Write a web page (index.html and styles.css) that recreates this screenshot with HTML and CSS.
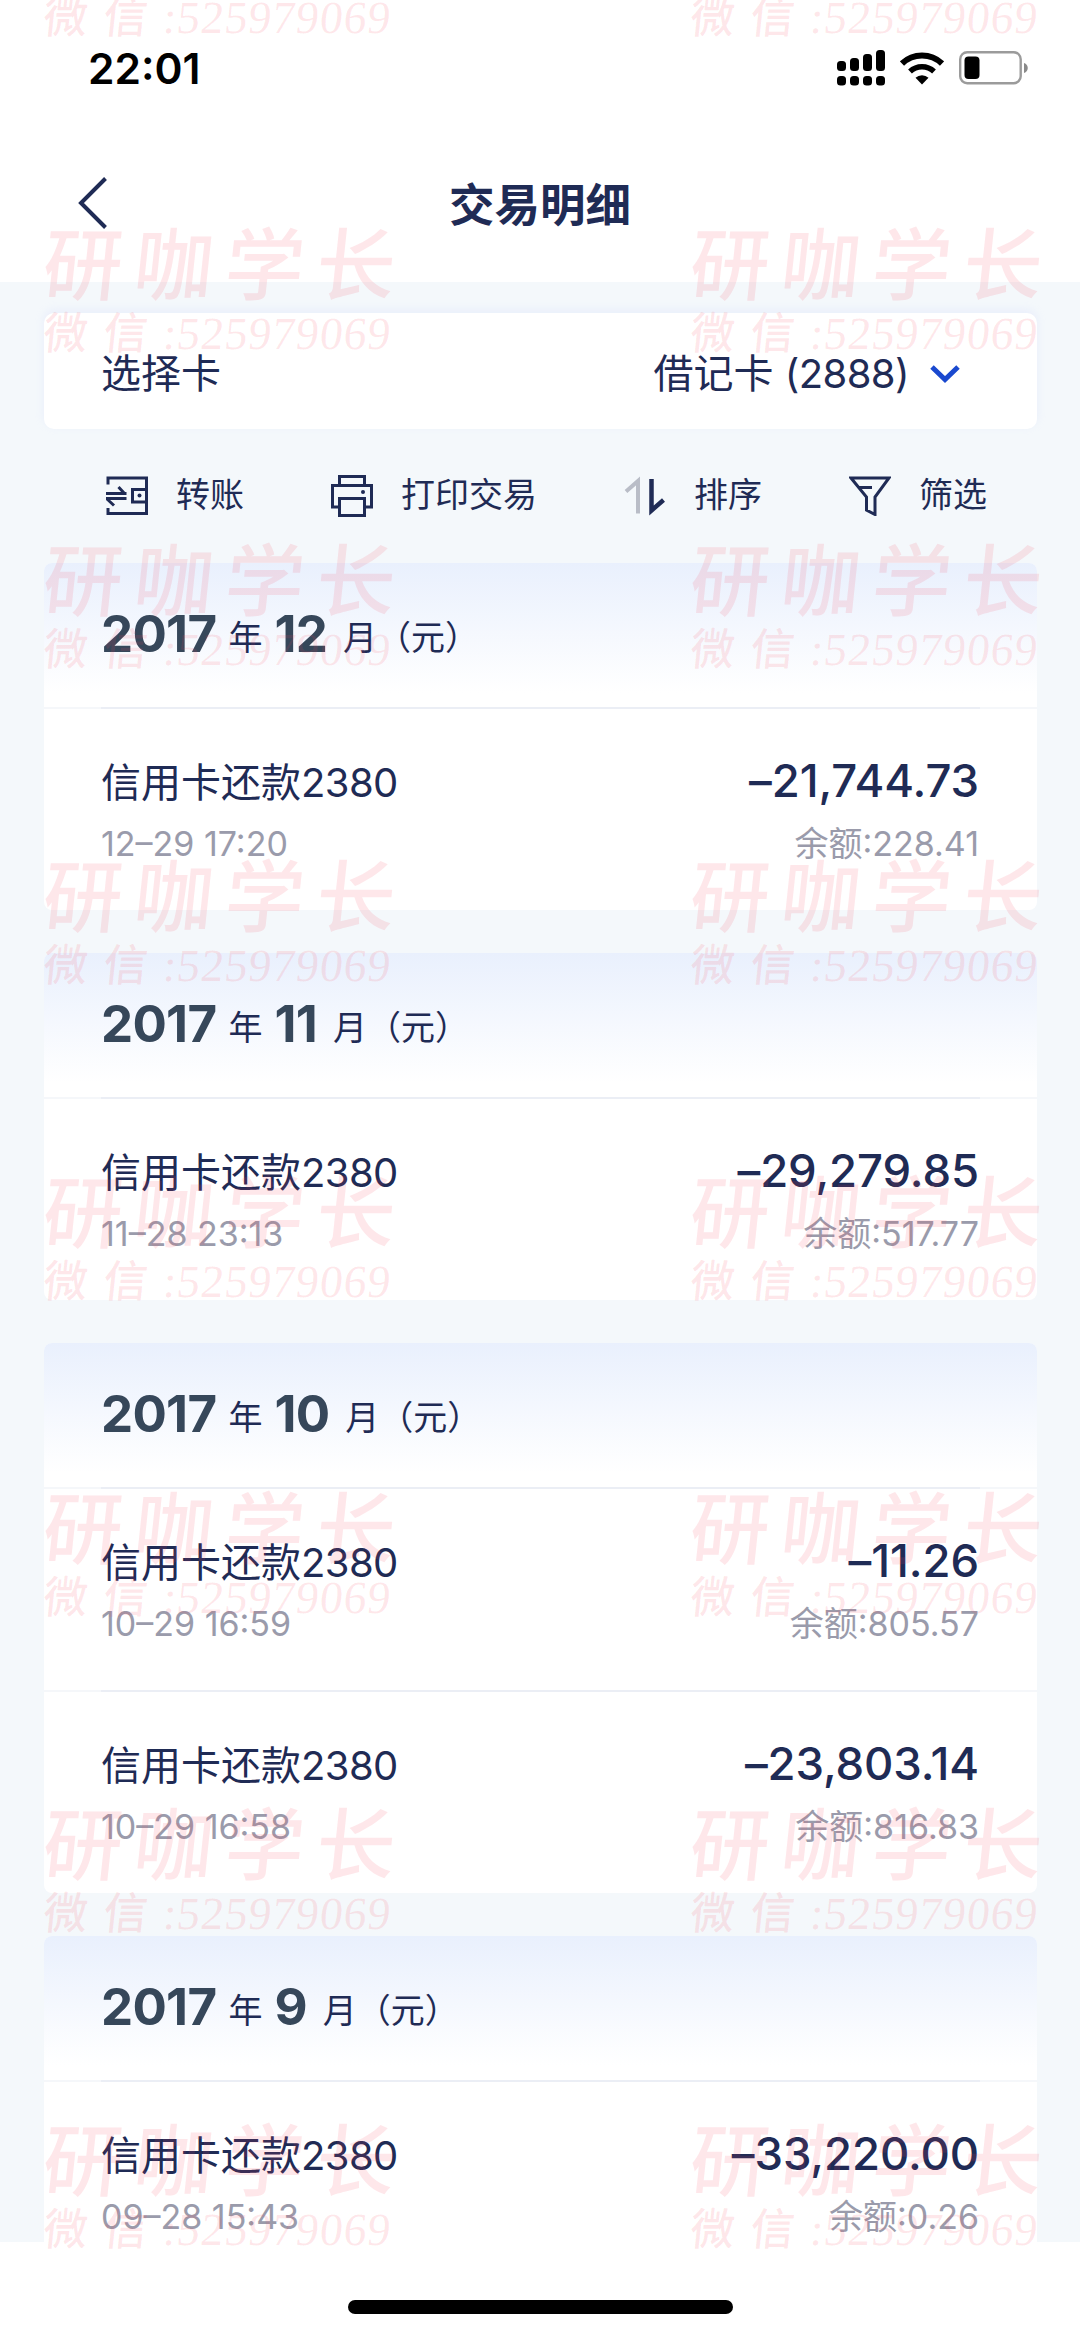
FILE: index.html
```html
<!DOCTYPE html>
<html lang="zh-CN">
<head>
  <meta charset="UTF-8">
  <title>交易明细</title>
  <link rel="stylesheet" href="styles.css">
</head>
<body>
  <div class="screen">
    <header class="top">
      <div class="status-bar">
        <div class="time">22:01</div>
        <div class="status-icons">
          <svg class="signal" width="48" height="36" viewBox="0 0 48 36">
            <rect x="0" y="11" width="9" height="10" rx="3.500"/>
            <rect x="13" y="8" width="9" height="13" rx="3.500"/>
            <rect x="26" y="4" width="9" height="17" rx="3.500"/>
            <rect x="39" y="0" width="9" height="21" rx="3.500"/>
            <rect x="0" y="26" width="9" height="9.500" rx="3.500"/>
            <rect x="13" y="26" width="9" height="9.500" rx="3.500"/>
            <rect x="26" y="26" width="9" height="9.500" rx="3.500"/>
            <rect x="39" y="26" width="9" height="9.500" rx="3.500"/>
          </svg>
          <svg class="wifi" width="44" height="34" viewBox="0 0 44 34">
            <path d="M2 12.500A29 29 0 0 1 42 12.500" fill="none" stroke="#000" stroke-width="6"/>
            <path d="M10 20.500A17.500 17.500 0 0 1 34 20.500" fill="none" stroke="#000" stroke-width="5.500"/>
            <path d="M22 33.500L15.500 26.800A9.500 9.500 0 0 1 28.500 26.800Z"/>
          </svg>
          <svg class="battery" width="69" height="34" viewBox="0 0 69 34">
            <rect x="1.200" y="1.200" width="60.500" height="31" rx="7" fill="none" stroke="#9b9b9b" stroke-width="2.400"/>
            <rect x="5.500" y="5.500" width="15" height="22.500" rx="4"/>
            <path d="M65 12C70 13.500 70 20.500 65 22Z" fill="#8a8a8a"/>
          </svg>
        </div>
      </div>
      <nav class="nav-bar">
        <svg class="back" width="30" height="52" viewBox="0 0 30 52"><path d="M27.500 1.500L3 26L27.500 50.500"/></svg>
        <h1>交易明细</h1>
      </nav>
    </header>

    <main>
      <div class="card-select">
        <span>选择卡</span>
        <div class="card-value">
          <span>借记卡 <span class="num">(2888)</span></span>
          <svg width="30" height="20" viewBox="0 0 30 20"><path d="M2 3L15 15.500L28 3"/></svg>
        </div>
      </div>

      <div class="tools">
        <div class="tool">
          <svg width="42" height="40" viewBox="0 0 42 40">
            <path d="M2 8.500V2H40.500V37.500H2V32M0 17.500H20.500M12.500 11L18.500 17.500M0 22.500H20.500M1 23L8 29.500M40.500 13.500H26.500V26H40.500"/>
            <circle cx="33.500" cy="19.500" r="2"/>
          </svg>
          <span>转账</span>
        </div>
        <div class="tool">
          <svg width="42" height="42" viewBox="0 0 42 42">
            <path d="M8.500 10.500V1.500H33.500V10.500M8.500 32H1.500V10.500H40.500V32H33.500M8.500 23.500H33.500V40.500H8.500Z"/>
            <circle cx="32" cy="17" r="2"/>
          </svg>
          <span>打印交易</span>
        </div>
        <div class="tool">
          <svg width="42" height="40" viewBox="0 0 42 40">
            <path class="up" d="M14 37.500V5L2 15.500"/>
            <path class="down" d="M27.500 3V34.500L39.500 24"/>
          </svg>
          <span>排序</span>
        </div>
        <div class="tool">
          <svg width="42" height="40" viewBox="0 0 42 40">
            <path d="M2 2H40L26 21V38.500L17.500 34V21ZM10 11.500H23"/>
          </svg>
          <span>筛选</span>
        </div>
      </div>

      <section class="month">
        <h2><b>2017</b><span>年</span><b>12</b><span class="unit">月（元）</span></h2>
        <div class="row">
          <div>
            <div class="title">信用卡还款<span class="num">2380</span></div>
            <div class="sub">12–29 17:20</div>
          </div>
          <div class="right">
            <div class="amount">–21,744.73</div>
            <div class="sub">余额:228.41</div>
          </div>
        </div>
      </section>

      <section class="month">
        <h2><b>2017</b><span>年</span><b>11</b><span class="unit">月（元）</span></h2>
        <div class="row">
          <div>
            <div class="title">信用卡还款<span class="num">2380</span></div>
            <div class="sub">11–28 23:13</div>
          </div>
          <div class="right">
            <div class="amount">–29,279.85</div>
            <div class="sub">余额:517.77</div>
          </div>
        </div>
      </section>

      <section class="month">
        <h2><b>2017</b><span>年</span><b>10</b><span class="unit">月（元）</span></h2>
        <div class="row">
          <div>
            <div class="title">信用卡还款<span class="num">2380</span></div>
            <div class="sub">10–29 16:59</div>
          </div>
          <div class="right">
            <div class="amount">–11.26</div>
            <div class="sub">余额:805.57</div>
          </div>
        </div>
        <div class="row">
          <div>
            <div class="title">信用卡还款<span class="num">2380</span></div>
            <div class="sub">10–29 16:58</div>
          </div>
          <div class="right">
            <div class="amount">–23,803.14</div>
            <div class="sub">余额:816.83</div>
          </div>
        </div>
      </section>

      <section class="month">
        <h2><b>2017</b><span>年</span><b>9</b><span class="unit">月（元）</span></h2>
        <div class="row">
          <div>
            <div class="title">信用卡还款<span class="num">2380</span></div>
            <div class="sub">09–28 15:43</div>
          </div>
          <div class="right">
            <div class="amount">–33,220.00</div>
            <div class="sub">余额:0.26</div>
          </div>
        </div>
      </section>
    </main>

    <footer class="home"><div class="home-bar"></div></footer>

    <!-- watermark -->
    <div class="watermark">
      <div class="stamp first"><p class="wx">微信<i>:525979069</i></p></div>
      <div class="stamp first"><p class="wx">微信<i>:525979069</i></p></div>
      <div class="stamp"><p>研咖学长</p><p class="wx">微信<i>:525979069</i></p></div>
      <div class="stamp"><p>研咖学长</p><p class="wx">微信<i>:525979069</i></p></div>
      <div class="stamp"><p>研咖学长</p><p class="wx">微信<i>:525979069</i></p></div>
      <div class="stamp"><p>研咖学长</p><p class="wx">微信<i>:525979069</i></p></div>
      <div class="stamp"><p>研咖学长</p><p class="wx">微信<i>:525979069</i></p></div>
      <div class="stamp"><p>研咖学长</p><p class="wx">微信<i>:525979069</i></p></div>
      <div class="stamp"><p>研咖学长</p><p class="wx">微信<i>:525979069</i></p></div>
      <div class="stamp"><p>研咖学长</p><p class="wx">微信<i>:525979069</i></p></div>
      <div class="stamp"><p>研咖学长</p><p class="wx">微信<i>:525979069</i></p></div>
      <div class="stamp"><p>研咖学长</p><p class="wx">微信<i>:525979069</i></p></div>
      <div class="stamp"><p>研咖学长</p><p class="wx">微信<i>:525979069</i></p></div>
      <div class="stamp"><p>研咖学长</p><p class="wx">微信<i>:525979069</i></p></div>
      <div class="stamp"><p>研咖学长</p><p class="wx">微信<i>:525979069</i></p></div>
      <div class="stamp"><p>研咖学长</p><p class="wx">微信<i>:525979069</i></p></div>
    </div>
  </div>
</body>
</html>
```

FILE: styles.css
```css
:root {
  --ink: #1f2b55;
  --ink-soft: #36475a;
  --muted: #9a9bab;
  --page: #f4f8fb;
  --line: #ebeef5;
  --line-soft: #f5f7fa;
  --blue: #1a49cf;
}
* {
  margin: 0;
  padding: 0;
  box-sizing: border-box;
}
body {
  background: #fff;
  color: var(--ink);
  font-family: Inter, "Noto Sans CJK SC", sans-serif;
}
.screen {
  position: relative;
  width: 1080px;
  height: 2336px;
  overflow: hidden;
  display: flex;
  flex-direction: column;
}

/* status bar + title */
.top {
  height: 282px;
  flex-shrink: 0;
}
.status-bar {
  height: 136px;
  padding: 0 52px 0 88px;
  display: flex;
  align-items: center;
  justify-content: space-between;
}
.time {
  font-size: 42.5px;
  font-weight: 600;
  color: #000;
}
.status-icons {
  display: flex;
  align-items: center;
  gap: 15px;
}
.nav-bar {
  height: 134px;
  padding: 0 78px;
  display: grid;
  grid-template-columns: 30px 1fr 30px;
  align-items: center;
}
.nav-bar h1 {
  padding-bottom: 3px;
  font-size: 45.5px;
  font-weight: 700;
  text-align: center;
}
.back path {
  fill: none;
  stroke: var(--ink);
  stroke-width: 4;
}

main {
  height: 1960px;
  flex-shrink: 0;
  overflow: hidden;
  padding: 31px 43px 0 44px;
  background: var(--page);
}
.card-select {
  height: 116px;
  padding: 0 77px 0 57px;
  display: flex;
  align-items: center;
  justify-content: space-between;
  background: #fff;
  border-radius: 10px;
  box-shadow: 0 -3px 10px rgba(190, 200, 255, 0.2);
  font-size: 40px;
}
.card-value {
  display: flex;
  align-items: center;
  gap: 21px;
}
.card-value svg {
  margin-top: 5px;
}
.card-value svg path {
  fill: none;
  stroke: var(--blue);
  stroke-width: 5;
}
.num {
  letter-spacing: -0.6px;
}

.tools {
  height: 134px;
  padding: 0 50px 0 62px;
  display: flex;
  align-items: center;
  justify-content: space-between;
}
.tool {
  display: flex;
  align-items: center;
  gap: 28px;
  font-size: 34px;
}
.tool span {
  padding-bottom: 7px;
}
.tool svg path {
  fill: none;
  stroke: var(--ink);
  stroke-width: 3;
}
.tool circle {
  fill: var(--ink);
}
.tool svg .up {
  stroke: #b9bdc7;
  stroke-width: 4;
}
.tool svg .down {
  stroke-width: 4.500;
}

/* month blocks */
.month {
  margin-bottom: 43px;
  background: #fff;
  border-radius: 8px;
  overflow: hidden;
}
.month h2 {
  height: 144px;
  padding-left: 57px;
  padding-top: 40px;
  display: flex;
  align-items: baseline;
  background: linear-gradient(#e9f0fd, #fff 90%);
  font-size: 34px;
  font-weight: 400;
}
.month h2 b {
  font-size: 51px;
  font-weight: 700;
  color: var(--ink-soft);
  letter-spacing: -0.7px;
}
.month h2 span {
  margin: 0 12px;
  padding-bottom: 3px;
  line-height: 34px;
  transform: translateY(-2px);
}
.month h2 .unit {
  margin-left: 16px;
}
.row {
  height: 203px;
  padding: 45px 58px 0 57px;
  display: flex;
  justify-content: space-between;
  background: linear-gradient(90deg, var(--line-soft) 57px, var(--line) 57px, var(--line) 936px, var(--line-soft) 936px) top / 100% 2px no-repeat;
}
.right {
  text-align: right;
}
.title,
.amount,
.sub {
  height: 60px;
  line-height: 60px;
  white-space: nowrap;
}
.title {
  padding-top: 1px;
  font-size: 40px;
}
.amount {
  line-height: 58px;
  font-size: 45.5px;
  font-weight: 500;
  letter-spacing: -0.1px;
}
.sub {
  padding-top: 2px;
  font-size: 34px;
  color: var(--muted);
}

.home {
  flex: 1;
  padding-top: 58px;
  background: #fff;
}
.home-bar {
  width: 385px;
  height: 14px;
  margin: 0 auto;
  border-radius: 7px;
  background: #000;
}

.watermark {
  position: absolute;
  top: -101px;
  left: 44px;
  display: grid;
  grid-template-columns: 647px 647px;
  grid-auto-rows: 316px;
  color: rgba(250, 70, 90, 0.13);
  pointer-events: none;
}
.stamp p {
  height: 90px;
  line-height: 100px;
  font-size: 79px;
  font-weight: 500;
  letter-spacing: 12px;
  white-space: nowrap;
  transform: skewX(-6deg);
}
.stamp .wx {
  height: 50px;
  line-height: 56px;
  font-size: 44px;
  letter-spacing: 16px;
}
.stamp.first {
  padding-top: 90px;
}
.wx i {
  font-family: "Liberation Serif", serif;
  font-size: 46px;
  font-style: normal;
  letter-spacing: 0.8px;
}
```
